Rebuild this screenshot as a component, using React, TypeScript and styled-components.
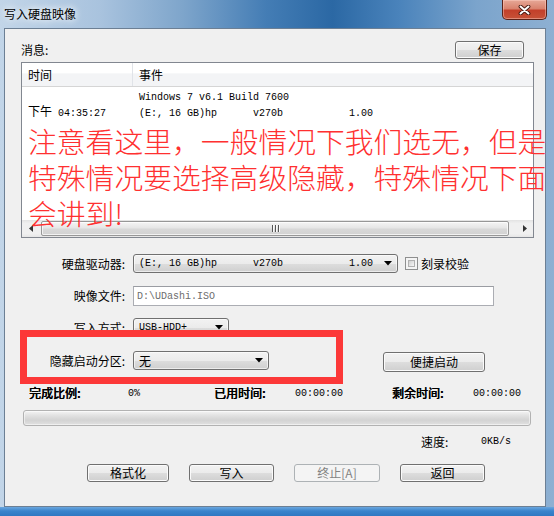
import React from 'react';
import styled, { createGlobalStyle, css } from 'styled-components';

const uiFont = `"Noto Sans CJK SC", "Liberation Sans", sans-serif`;
const monoFont = `"Liberation Mono", "Noto Sans CJK SC", monospace`;

const GlobalStyle = createGlobalStyle`
  html, body {
    margin: 0;
    padding: 0;
    background: #ffffff;
  }
  body {
    font-family: ${uiFont};
    font-size: 12px;
    color: #000;
  }
  #root {
    width: 554px;
    height: 516px;
    overflow: hidden;
  }
`;

const Window = styled.div`
  width: 554px;
  height: 516px;
  box-sizing: border-box;
  display: flex;
  flex-direction: column;
  background:
    linear-gradient(180deg, #6aa6de 0%, #3a84cc 45%, #2f78c2 100%) bottom / 100% 9px no-repeat,
    linear-gradient(90deg, #c2d5e8 0%, #a9c3de 18%, #7ea5cb 33%, #447db5 48%, #2b68a4 60%, #4a83bb 72%, #7ba4cc 86%, #8eb0d2 100%);
`;

const TitleBar = styled.div`
  height: 28px;
  flex-shrink: 0;
  display: flex;
  align-items: flex-start;
  justify-content: space-between;
`;

const TitleText = styled.div`
  padding: 6px 0 0 4px;
  font-size: 12px;
  line-height: 16px;
  color: #000;
  text-shadow: 0 0 6px #ffffff, 0 0 10px rgba(255, 255, 255, 0.8);
`;

const CloseButton = styled.div`
  width: 45px;
  height: 20px;
  margin-right: 7px;
  box-sizing: border-box;
  border: 1px solid #5a2219;
  border-top: none;
  border-radius: 0 0 5px 5px;
  background: linear-gradient(180deg, #e6a897 0%, #d9826e 45%, #c3402a 55%, #c65238 100%);
  box-shadow: inset 0 0 0 1px rgba(255, 210, 200, 0.45);
  display: flex;
  align-items: center;
  justify-content: center;
`;

const Body = styled.div`
  flex: 1;
  display: flex;
  padding: 0 8px 9px 4px;
`;

const Client = styled.div`
  flex: 1;
  position: relative;
  display: flex;
  flex-direction: column;
  background: #f0f0f0;
  border: 1px solid #6c7f94;
  padding: 12px 11px 0 16px;
`;

const MessageHeader = styled.div`
  height: 18px;
  display: flex;
  align-items: center;
  justify-content: space-between;
  line-height: 16px;
`;

const PushButton = styled.div<{ $w: number; $h?: number; $disabled?: boolean }>`
  width: ${({ $w }) => $w}px;
  height: ${({ $h }) => $h ?? 18}px;
  box-sizing: border-box;
  border: 1px solid #707070;
  border-radius: 3px;
  background: linear-gradient(180deg, #f2f2f2 0%, #ebebeb 50%, #dddddd 51%, #cfcfcf 100%);
  box-shadow: inset 0 0 0 1px #fbfbfb;
  display: flex;
  align-items: center;
  justify-content: center;
  font-size: 12px;
  line-height: 16px;
  color: #000;
  ${({ $disabled }) =>
    $disabled &&
    css`
      border-color: #adb2b5;
      background: #f4f4f4;
      box-shadow: none;
      color: #838383;
    `}
`;

const ListView = styled.div`
  margin-top: 3px;
  height: 176px;
  box-sizing: border-box;
  border: 1px solid #828790;
  background: #ffffff;
  display: flex;
  flex-direction: column;
`;

const ListHeader = styled.div`
  height: 24px;
  box-sizing: border-box;
  display: flex;
  border-bottom: 1px solid #d5d5d5;
  background: linear-gradient(180deg, #ffffff 0%, #ffffff 45%, #f3f4f6 46%, #f3f4f6 100%);
`;

const HeaderCell = styled.div<{ $w?: number }>`
  ${({ $w }) => ($w ? `width: ${$w}px; border-right: 1px solid #e0e3e8;` : 'flex: 1;')}
  box-sizing: border-box;
  padding-left: 6px;
  display: flex;
  align-items: center;
  line-height: 16px;
`;

const ListBody = styled.div`
  flex: 1;
  padding-top: 1px;
`;

const ListRow = styled.div`
  height: 16px;
  display: flex;
  align-items: center;
`;

const Cell = styled.div<{ $w?: number }>`
  ${({ $w }) => ($w ? `width: ${$w}px;` : 'flex: 1;')}
  box-sizing: border-box;
  padding-left: 6px;
  white-space: pre;
  line-height: 16px;
`;

const Mono = styled.span<{ $color?: string }>`
  font-family: ${monoFont};
  font-size: 10px;
  white-space: pre;
  color: ${({ $color }) => $color ?? '#000'};
`;

const HScrollBar = styled.div`
  height: 17px;
  display: flex;
  background: linear-gradient(180deg, #e3e3e3 0%, #f0f0f0 20%, #f0f0f0 80%, #e6e6e6 100%);
`;

const ScrollArrow = styled.div`
  width: 17px;
  display: flex;
  align-items: center;
  justify-content: center;
`;

const Thumb = styled.div`
  flex: 1;
  margin: 1px 7px 1px 2px;
  border: 1px solid #979797;
  border-radius: 2px;
  background: linear-gradient(180deg, #f5f5f5 0%, #e6e6e6 45%, #d8d8d8 55%, #d2d2d2 100%);
  box-shadow: inset 0 0 0 1px rgba(255, 255, 255, 0.7);
  display: flex;
  align-items: center;
  justify-content: center;
  gap: 2px;
`;

const Grip = styled.span`
  width: 1px;
  height: 7px;
  background: #555;
  box-shadow: 1px 0 0 #fafafa;
`;

const FieldRow = styled.div<{ $top: number; $h: number }>`
  margin-top: ${({ $top }) => $top}px;
  height: ${({ $h }) => $h}px;
  display: flex;
  align-items: center;
`;

const Label = styled.div`
  width: 104px;
  margin-right: 8px;
  text-align: right;
  line-height: 16px;
  white-space: nowrap;
`;

const Combo = styled.div<{ $w: number }>`
  width: ${({ $w }) => $w}px;
  height: 19px;
  box-sizing: border-box;
  border: 1px solid #707070;
  border-radius: 3px;
  background: linear-gradient(180deg, #f2f2f2 0%, #ebebeb 50%, #dddddd 51%, #cfcfcf 100%);
  box-shadow: inset 0 0 0 1px rgba(255, 255, 255, 0.6);
  padding: 0 5px 0 5px;
  display: flex;
  align-items: center;
  justify-content: space-between;
  line-height: 16px;
  align-self: flex-start;
`;

const DropArrow = () => (
  <svg width="8" height="5" viewBox="0 0 8 5">
    <path d="M0 0 H8 L4 4.5 Z" fill="#000" />
  </svg>
);

const CheckBox = styled.span`
  width: 13px;
  height: 13px;
  box-sizing: border-box;
  margin-left: 7px;
  border: 1px solid #8e8f8f;
  background: #f4f4f4;
  padding: 2px;
  display: inline-flex;
  &::after {
    content: '';
    flex: 1;
    border: 1px solid #b0b0b0;
    background: linear-gradient(135deg, #cfcfcf, #f7f7f7);
  }
`;

const CheckLabel = styled.span`
  margin-left: 3px;
  line-height: 16px;
`;

const TextBox = styled.div<{ $w: number }>`
  width: ${({ $w }) => $w}px;
  height: 20px;
  box-sizing: border-box;
  border: 1px solid #abadb3;
  border-top-color: #9a9ca2;
  background: #ffffff;
  padding-left: 3px;
  display: flex;
  align-items: center;
`;

const StatsRow = styled.div`
  margin-top: 14px;
  height: 14px;
  padding-left: 8px;
  display: grid;
  grid-template-columns: 99px 86px 81px 97px 81px auto;
  align-items: center;
`;

const StatLabel = styled.span`
  font-weight: 500;
  line-height: 14px;
  white-space: nowrap;
  text-shadow: 0.3px 0 0 #000;
`;

const ProgressBar = styled.div`
  margin: 10px 3px 0 2px;
  height: 16px;
  box-sizing: border-box;
  border: 1px solid #b2b2b2;
  border-radius: 3px;
  background: linear-gradient(180deg, #f4f4f4 0%, #e0e0e0 35%, #d3d3d3 65%, #e1e1e1 100%);
  box-shadow: inset 0 0 0 1px rgba(255, 255, 255, 0.5);
`;

const SpeedRow = styled.div`
  margin-top: 9px;
  height: 14px;
  padding-left: 400px;
  display: grid;
  grid-template-columns: 60px auto;
  align-items: center;
  line-height: 14px;
`;

const ButtonRow = styled.div`
  margin-top: 15px;
  padding-left: 66px;
  display: flex;
  gap: 20px;
`;

const Annotation = styled.div`
  position: absolute;
  left: 23px;
  top: 94px;
  color: #ff3030;
  font-family: ${uiFont};
  font-weight: 300;
  font-size: 28.8px;
  line-height: 36px;
  white-space: nowrap;
  pointer-events: none;
`;

const HighlightBox = styled.div`
  position: absolute;
  left: 15px;
  top: 301px;
  width: 323px;
  height: 54px;
  box-sizing: border-box;
  border: 7px solid #fc3838;
  pointer-events: none;
`;

export default function App() {
  return (
    <>
      <GlobalStyle />
      <Window>
        <TitleBar>
          <TitleText>写入硬盘映像</TitleText>
          <CloseButton>
            <svg width="13" height="10" viewBox="0 0 13 10">
              <path d="M2.5 1.5 L10.5 8.5 M10.5 1.5 L2.5 8.5" stroke="#43170f" strokeWidth="3.8" strokeLinecap="round" />
              <path d="M2.5 1.5 L10.5 8.5 M10.5 1.5 L2.5 8.5" stroke="#ffffff" strokeWidth="2" strokeLinecap="round" />
            </svg>
          </CloseButton>
        </TitleBar>
        <Body>
          <Client>
            <MessageHeader>
              <span>消息:</span>
              <PushButton $w={69} style={{ marginRight: 10 }}>保存</PushButton>
            </MessageHeader>

            <ListView>
              <ListHeader>
                <HeaderCell $w={111}>时间</HeaderCell>
                <HeaderCell>事件</HeaderCell>
              </ListHeader>
              <ListBody>
                <ListRow>
                  <Cell $w={111} />
                  <Cell>
                    <Mono>Windows 7 v6.1 Build 7600</Mono>
                  </Cell>
                </ListRow>
                <ListRow>
                  <Cell $w={111}>
                    下午<Mono> 04:35:27</Mono>
                  </Cell>
                  <Cell>
                    <Mono>{'(E:, 16 GB)hp      v270b           1.00'}</Mono>
                  </Cell>
                </ListRow>
              </ListBody>
              <HScrollBar>
                <ScrollArrow>
                  <svg width="4" height="7" viewBox="0 0 4 7">
                    <path d="M4 0 V7 L0 3.5 Z" fill="#333" />
                  </svg>
                </ScrollArrow>
                <Thumb>
                  <Grip />
                  <Grip />
                  <Grip />
                </Thumb>
                <ScrollArrow>
                  <svg width="4" height="7" viewBox="0 0 4 7">
                    <path d="M0 0 V7 L4 3.5 Z" fill="#333" />
                  </svg>
                </ScrollArrow>
              </HScrollBar>
            </ListView>

            <FieldRow $top={16} $h={19}>
              <Label>硬盘驱动器:</Label>
              <Combo $w={265}>
                <Mono>{'(E:, 16 GB)hp      v270b           1.00'}</Mono>
                <DropArrow />
              </Combo>
              <CheckBox />
              <CheckLabel>刻录校验</CheckLabel>
            </FieldRow>

            <FieldRow $top={13} $h={20}>
              <Label>映像文件:</Label>
              <TextBox $w={361}>
                <Mono $color="#6d6d6d">D:\UDashi.ISO</Mono>
              </TextBox>
            </FieldRow>

            <FieldRow $top={12} $h={19}>
              <Label>写入方式:</Label>
              <Combo $w={96}>
                <Mono>USB-HDD+</Mono>
                <DropArrow />
              </Combo>
            </FieldRow>

            <FieldRow $top={14} $h={21}>
              <Label style={{ alignSelf: 'flex-start', lineHeight: '19px' }}>隐藏启动分区:</Label>
              <Combo $w={136}>
                <span>无</span>
                <DropArrow />
              </Combo>
              <PushButton $w={102} $h={20} style={{ marginLeft: 114, alignSelf: 'flex-end' }}>
                便捷启动
              </PushButton>
            </FieldRow>

            <StatsRow>
              <StatLabel>完成比例:</StatLabel>
              <Mono>0%</Mono>
              <StatLabel>已用时间:</StatLabel>
              <Mono>00:00:00</Mono>
              <StatLabel>剩余时间:</StatLabel>
              <Mono>00:00:00</Mono>
            </StatsRow>

            <ProgressBar />

            <SpeedRow>
              <span>速度:</span>
              <Mono>0KB/s</Mono>
            </SpeedRow>

            <ButtonRow>
              <PushButton $w={82}>格式化</PushButton>
              <PushButton $w={85}>写入</PushButton>
              <PushButton $w={86} $disabled>
                终止[A]
              </PushButton>
              <PushButton $w={85}>返回</PushButton>
            </ButtonRow>

            <Annotation>
              <div>注意看这里，一般情况下我们选无，但是</div>
              <div>特殊情况要选择高级隐藏，特殊情况下面</div>
              <div>会讲到!</div>
            </Annotation>
            <HighlightBox />
          </Client>
        </Body>
      </Window>
    </>
  );
}
